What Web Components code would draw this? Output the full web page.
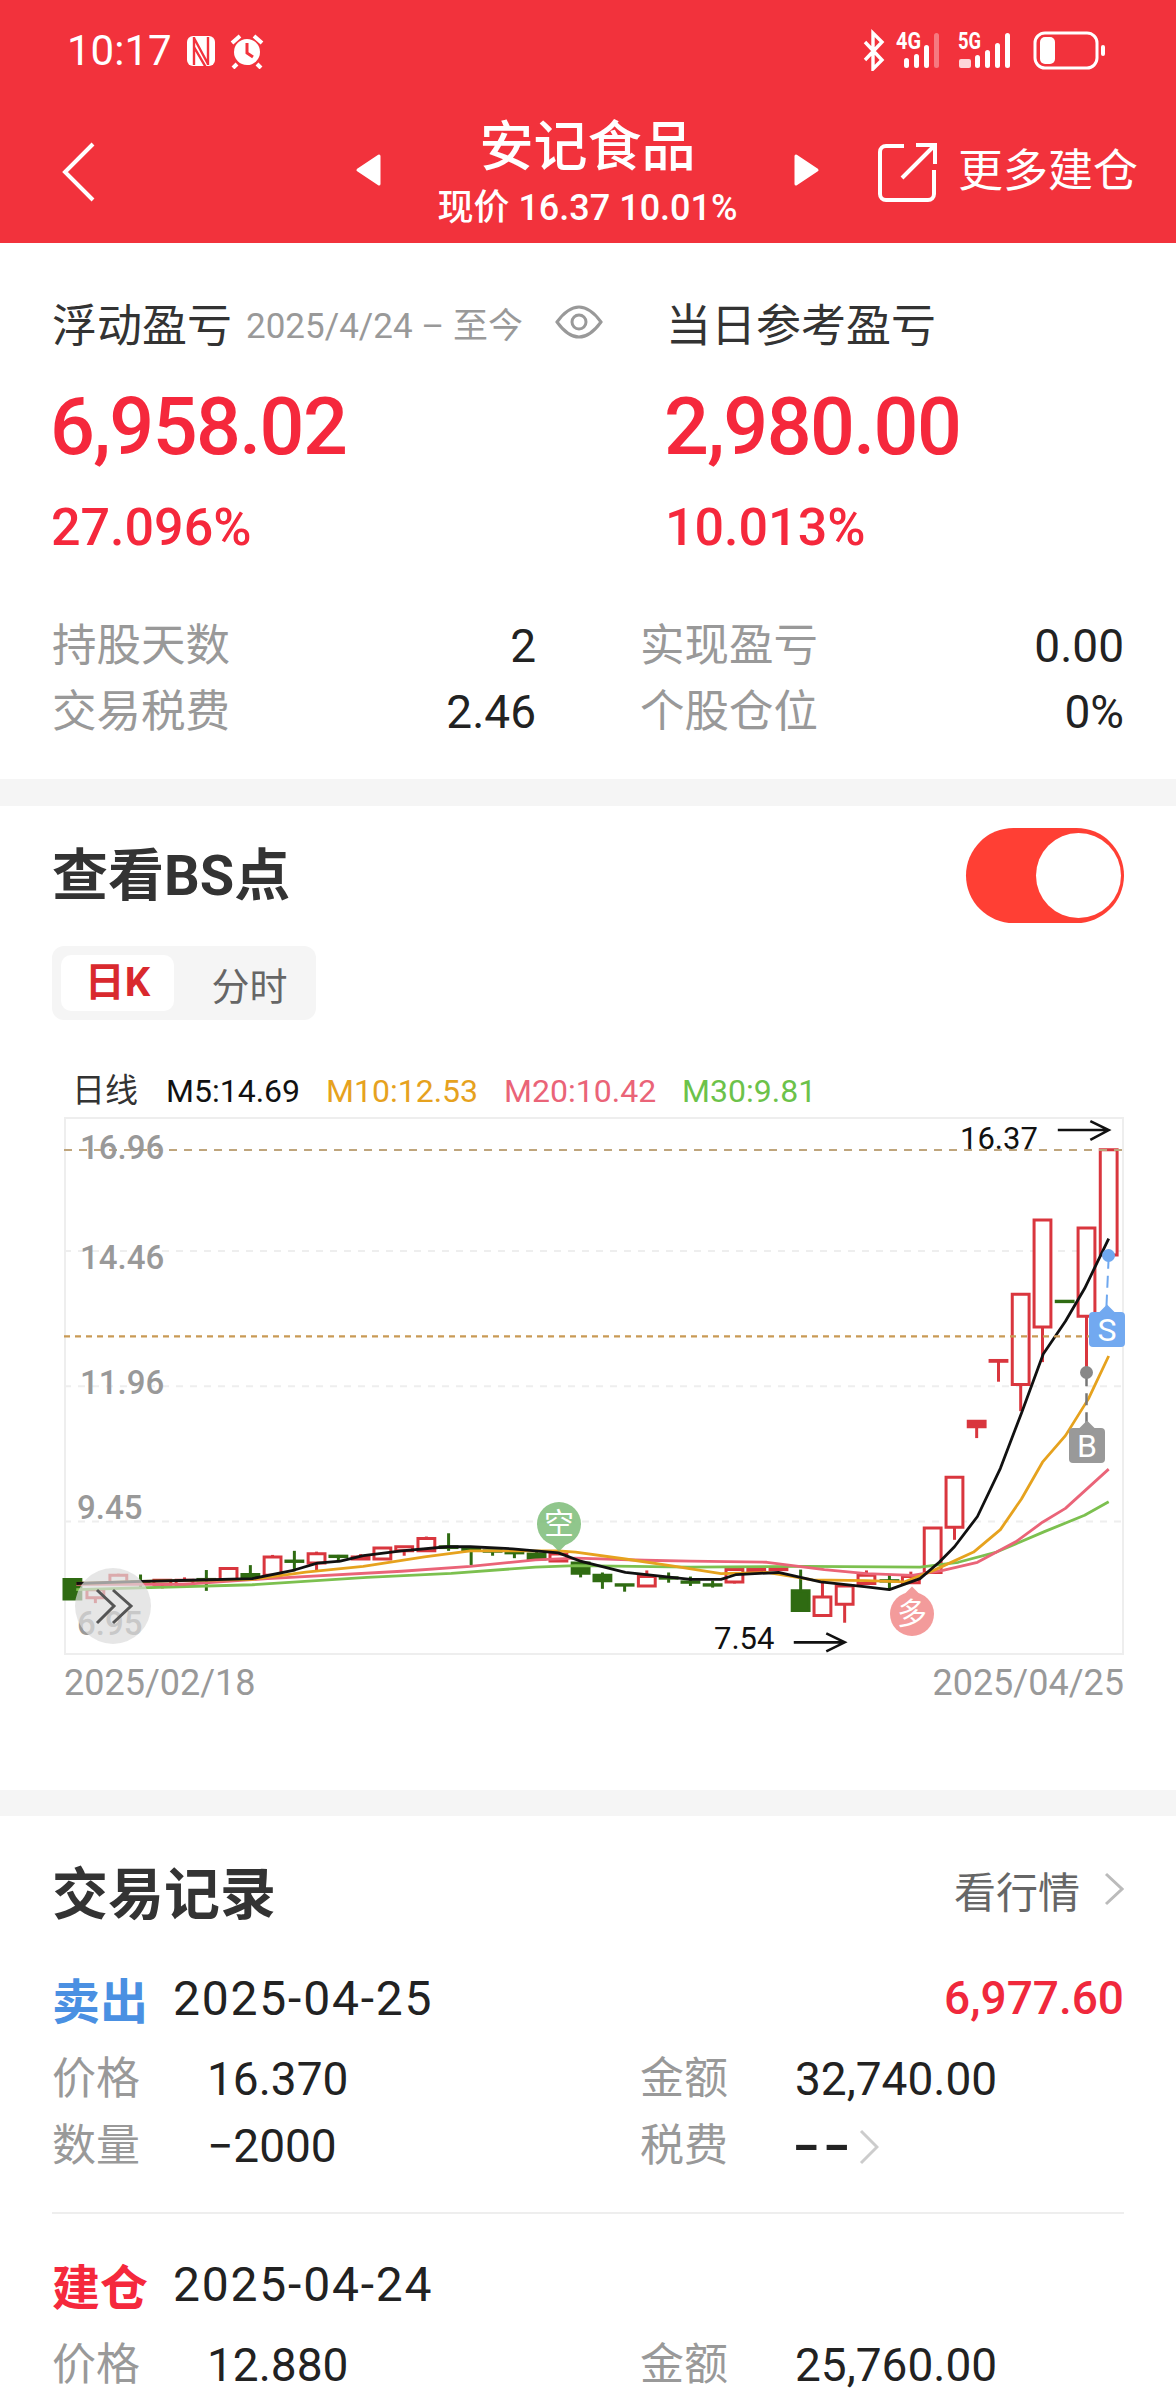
<!DOCTYPE html>
<html lang="zh">
<head>
<meta charset="utf-8">
<title>安记食品</title>
<style>
    html, body { margin: 0; padding: 0; height: 2400px; overflow: hidden; background: #fff; }
    body { font-family: Roboto, "Noto Sans CJK SC", sans-serif; color: #333; }
</style>
</head>
<body>
<stock-header></stock-header>
<pnl-summary></pnl-summary>
<bs-chart></bs-chart>
<trade-list>
    <trade-record kind="sell" action="卖出" date="2025-04-25" profit="6,977.60" price="16.370" amount="32,740.00" qty="−2000" tax="--"></trade-record>
    <trade-record kind="buy" action="建仓" date="2025-04-24" price="12.880" amount="25,760.00"></trade-record>
</trade-list>

<script>
class StockHeader extends HTMLElement {
    constructor() {
        super();
        this.attachShadow({ mode: "open" });
    }

    connectedCallback() {
        this.shadowRoot.innerHTML = `
            <style>
                :host { display: block; height: 243px; background: #f2323c; color: #fff; }
                .status { display: flex; justify-content: space-between; align-items: center; height: 68px; padding: 17px 71px 0 67px; }
                .left, .right { display: flex; align-items: center; }
                .time { font-size: 42px; line-height: 48px; margin-right: 13px; }
                .left svg { margin-right: 12px; }
                .right svg { margin-top: -12px; }
                .nav { display: flex; align-items: center; height: 142px; padding: 16px 38px 0 62px; }
                .back { width: 293px; height: 60px; }
                .middle { display: flex; align-items: center; width: 465px; justify-content: space-between; margin-bottom: 4px; }
                .name { text-align: center; }
                .name b { display: block; font-size: 54px; line-height: 66px; font-weight: 500; margin-top: 5px; }
                .name span { display: block; font-size: 36px; line-height: 44px; font-weight: 500; margin-top: 5px; }
                .more { display: flex; align-items: center; gap: 20px; margin-left: auto; font-size: 45px; line-height: 60px; }
                .status text { font: 700 23px Roboto, sans-serif; fill: #fff; }
            </style>
            <div class="status">
                <div class="left">
                    <span class="time">10:17</span>
                    <svg width="32" height="34" viewBox="0 0 32 34"><rect x="2" y="2" width="28" height="30" rx="6" fill="#fff"/><path d="M9 3v28M23 3v28M9 4l14 26M9 13l14 24" stroke="#f2323c" stroke-width="2.4" fill="none"/></svg>
                    <svg width="36" height="36" viewBox="0 0 36 36"><circle cx="18" cy="19" r="13" fill="#fff"/><path d="M18 10v10l6 4" stroke="#f2323c" stroke-width="3" fill="none"/><path d="M3 10l8-7M33 10l-8-7M8 31l-4 4M28 31l4 4" stroke="#fff" stroke-width="4" fill="none"/></svg>
                </div>
                <div class="right">
                    <svg width="243" height="52" viewBox="0 -12 243 52">
                        <path d="M3 11l17 18-9 9V2l9 9L3 29" stroke="#fff" stroke-width="3.4" fill="none"/>
                        <text x="34" y="18" textLength="25" lengthAdjust="spacingAndGlyphs">4G</text>
                        <g fill="#fff"><rect x="42" y="27" width="5" height="10" rx="2.5"/><rect x="52" y="23" width="5" height="14" rx="2.5"/><rect x="62" y="14" width="5" height="23" rx="2.5"/><rect x="72" y="2" width="5" height="35" rx="2.5" opacity=".35"/></g>
                        <text x="96" y="18" textLength="23" lengthAdjust="spacingAndGlyphs">5G</text>
                        <g fill="#fff"><rect x="97" y="28" width="12" height="9" rx="2" opacity=".8"/><rect x="113" y="24" width="5" height="13" rx="2.5"/><rect x="123" y="19" width="5" height="18" rx="2.5"/><rect x="133" y="12" width="5" height="25" rx="2.5"/><rect x="143" y="2" width="5" height="35" rx="2.5"/></g>
                        <rect x="173" y="2" width="62" height="35" rx="10" fill="none" stroke="#fff" stroke-width="3"/>
                        <rect x="178" y="6" width="15" height="27" rx="5" fill="#fff"/>
                        <rect x="239" y="14" width="4" height="11" rx="2" fill="#fff"/>
                    </svg>
                </div>
            </div>
            <div class="nav">
                <div class="back"><svg width="34" height="60" viewBox="0 0 34 60"><path d="M31 2L3 30l28 28" stroke="#fff" stroke-width="4" fill="none"/></svg></div>
                <div class="middle">
                    <svg width="26" height="34" viewBox="0 0 26 34"><path d="M24 3v28L3 17z" fill="#fff" stroke="#fff" stroke-width="3" stroke-linejoin="round"/></svg>
                    <div class="name"><b>安记食品</b><span>现价 16.37 10.01%</span></div>
                    <svg width="26" height="34" viewBox="0 0 26 34"><path d="M2 3v28l21-14z" fill="#fff" stroke="#fff" stroke-width="3" stroke-linejoin="round"/></svg>
                </div>
                <div class="more">
                    <svg width="60" height="60" viewBox="0 0 60 60"><path d="M26 4H8a6 6 0 0 0-6 6v42a6 6 0 0 0 6 6h42a6 6 0 0 0 6-6V28" stroke="#fff" stroke-width="4" fill="none"/><path d="M24 36L57 3M38 3h19v19" stroke="#fff" stroke-width="4" fill="none"/></svg>
                    <span>更多建仓</span>
                </div>
            </div>
        `;
    }
}

class PnlSummary extends HTMLElement {
    constructor() {
        super();
        this.attachShadow({ mode: "open" });
    }

    connectedCallback() {
        this.shadowRoot.innerHTML = `
            <style>
                :host { display: block; padding: 49px 52px 0; box-sizing: border-box; border-bottom: 27px solid #f5f5f5; height: 563px; }
                .pair { display: grid; grid-template-columns: 614px 1fr; }
                .head { display: flex; align-items: center; height: 60px; font-size: 45px; color: #333; white-space: nowrap; }
                .head small { font-size: 35px; color: #999; margin-left: 14px; }
                .head svg { margin-left: 32px; }
                .big { height: 100px; line-height: 100px; margin: 25px 0 0 -2px; font-size: 79px; font-weight: 500; color: #f5283c; letter-spacing: -1.6px; }
                .pct { height: 60px; line-height: 60px; margin: 21px 0 0 -1px; font-size: 52px; font-weight: 500; color: #f5283c; }
                .stats { display: grid; grid-template-columns: 484px 484px; column-gap: 104px; margin-top: 55px; }
                .stats div { display: flex; justify-content: space-between; height: 66px; line-height: 66px; font-size: 46px; color: #222; }
                .stats span { font-size: 44.5px; color: #999; }
            </style>
            <div class="pair">
                <div class="head">浮动盈亏<small>2025/4/24 – 至今</small>
                    <svg width="48" height="34" viewBox="0 0 48 34"><path d="M2 17C10 6 17 2 24 2s14 4 22 15c-8 11-15 15-22 15S10 28 2 17z" stroke="#999" stroke-width="3" fill="none"/><circle cx="24" cy="17" r="7" stroke="#999" stroke-width="3" fill="none"/></svg>
                </div>
                <div class="head">当日参考盈亏</div>
            </div>
            <div class="pair"><div class="big">6,958.02</div><div class="big">2,980.00</div></div>
            <div class="pair"><div class="pct">27.096%</div><div class="pct">10.013%</div></div>
            <div class="stats">
                <div><span>持股天数</span>2</div>
                <div><span>实现盈亏</span>0.00</div>
                <div><span>交易税费</span>2.46</div>
                <div><span>个股仓位</span>0%</div>
            </div>
        `;
    }
}

// chart coords: 2770 x 1317 grid, x runs -1337..1433 and y runs 90..1407
const CANDLES = [
    [-1315,1222,1270,1220,1272,"f"], [-1255,1247,1267,1247,1280,"r"], [-1195,1212,1232,1208,1232,"r"],
    [-1137,1227,1228,1210,1242,"g"], [-1080,1224,1234,1224,1244,"r"], [-1022,1224,1234,1217,1240,"r"],
    [-965,1222,1223,1199,1250,"g"], [-907,1195,1222,1192,1222,"r"], [-850,1210,1218,1187,1220,"f"],
    [-792,1167,1212,1162,1212,"r"], [-735,1177,1178,1152,1202,"g"], [-677,1159,1182,1154,1199,"r"],
    [-620,1165,1166,1162,1180,"g"], [-562,1167,1172,1160,1172,"r"], [-505,1145,1172,1145,1172,"r"],
    [-448,1142,1152,1142,1164,"r"], [-390,1122,1152,1117,1152,"r"], [-332,1142,1144,1109,1152,"g"],
    [-273,1147,1150,1147,1187,"g"], [-217,1152,1153,1152,1164,"g"], [-160,1156,1157,1147,1170,"g"],
    [-102,1160,1172,1154,1172,"f"], [-45,1160,1177,1160,1177,"r"], [13,1182,1207,1174,1217,"f"],
    [70,1212,1225,1205,1245,"f"], [128,1235,1236,1235,1252,"g"], [186,1215,1238,1200,1238,"r"],
    [243,1218,1219,1205,1230,"g"], [300,1228,1229,1215,1238,"g"], [358,1235,1236,1225,1242,"g"],
    [415,1198,1228,1198,1232,"r"], [472,1195,1202,1190,1205,"r"], [530,1193,1198,1190,1200,"r"],
    [588,1250,1298,1198,1298,"f"], [645,1265,1310,1230,1310,"r"], [703,1238,1283,1238,1328,"r"],
    [760,1212,1232,1200,1232,"r"], [820,1225,1226,1210,1248,"g"], [876,1215,1230,1203,1230,"r"],
    [933,1096,1205,1096,1205,"r"], [990,972,1094,972,1125,"r"], [1048,835,848,835,876,"R"],
    [1105,686,688,686,738,"R"], [1163,524,745,524,810,"r"], [1220,342,604,342,690,"r"],
    [1278,541,542,541,541,"g"], [1335,362,578,362,720,"r"], [1393,170,428,170,428,"r"]
];

const MA_LINES = {
    "#7cc04f": "-1305,1247 -845,1235 -545,1217 -325,1207 -105,1192 0,1188 300,1192 600,1190 900,1192 1000,1180 1100,1155 1225,1105 1330,1065 1393,1032",
    "#ea6478": "-1305,1234 -1025,1234 -805,1220 -455,1202 -275,1190 -105,1174 0,1170 180,1175 300,1177 500,1180 650,1198 760,1208 880,1212 960,1200 1050,1180 1150,1130 1220,1082 1280,1048 1393,952",
    "#e6a21e": "-1305,1232 -1135,1227 -845,1222 -705,1204 -555,1190 -395,1167 -275,1152 -45,1152 0,1155 130,1172 260,1190 380,1208 500,1205 620,1223 760,1225 860,1228 940,1198 1040,1155 1110,1100 1165,1025 1220,935 1280,870 1340,780 1393,675",
    "#111": "-1305,1232 -1135,1227 -1005,1224 -845,1220 -735,1199 -675,1182 -615,1177 -555,1164 -455,1152 -335,1142 -275,1142 -165,1147 -45,1157 15,1178 130,1205 300,1222 380,1222 420,1210 530,1205 640,1228 760,1240 820,1247 900,1220 950,1180 990,1142 1050,1068 1110,950 1165,815 1222,670 1280,590 1330,510 1393,388"
};

class BsChart extends HTMLElement {
    constructor() {
        super();
        this.attachShadow({ mode: "open" });
    }

    candle([x, top, bottom, wickTop, wickBottom, kind]) {
        const color = kind === "r" || kind === "R" ? "#d9363e" : "#2f6b12";
        const fill = kind === "r" ? "#fff" : color;
        const wick = `<path d="M${x} ${wickTop}V${wickBottom}" stroke="${color}" />`;
        return `${wick}<rect x="${x - 22}" y="${top}" width="44" height="${bottom - top}" fill="${fill}" stroke="${color}" />`;
    }

    connectedCallback() {
        const grid = [[418, "#eee"], [749, "#eee"], [1080, "#eee"]]
            .map(([y, c]) => `<path d="M-1337 ${y}H1433" stroke="${c}" stroke-width="2" stroke-dasharray="7 7" />`).join("");
        const lines = Object.entries(MA_LINES)
            .map(([c, pts]) => `<polyline points="${pts}" fill="none" stroke="${c}" stroke-width="2.8" stroke-linejoin="round" />`).join("");

        this.shadowRoot.innerHTML = `
            <style>
                :host { display: block; padding: 22px 52px 0; height: 1010px; box-sizing: border-box; border-bottom: 26px solid #f5f5f5; }
                .top { display: flex; justify-content: space-between; align-items: center; height: 95px; }
                h2 { margin: 0; font-size: 56px; line-height: 70px; font-weight: 700; color: #333; }
                .toggle { position: relative; width: 158px; height: 95px; border-radius: 48px; background: #ff3f34; }
                .toggle i { position: absolute; right: 3px; top: 5px; width: 85px; height: 85px; border-radius: 50%; background: #fff; }
                .seg { display: inline-flex; align-items: center; box-sizing: border-box; width: 264px; height: 74px; margin-top: 23px; padding: 0 9px; background: #f5f5f5; border-radius: 12px; font-size: 38px; color: #666; }
                .seg b { width: 113px; height: 56px; line-height: 56px; text-align: center; background: #fff; border-radius: 10px; font-size: 40px; color: #d9292e; font-weight: 700; }
                .seg span { flex: 1; text-align: center; padding-left: 18px; }
                .legend { display: flex; gap: 26px; height: 44px; line-height: 44px; margin: 49px 0 4px 20px; font-size: 32px; white-space: nowrap; color: #111; }
                .legend span:first-child { margin-right: 2px; font-size: 33px; color: #333; }
                .canvas { position: relative; width: 1060px; height: 538px; margin-left: 12px; box-sizing: border-box; border: 2px solid #eee; }
                svg.plot { position: absolute; left: -2px; top: -2px; width: 1060px; height: 538px; overflow: visible; }
                svg.plot * { vector-effect: non-scaling-stroke; }
                .candles { stroke-width: 3; }
                .axis, .note { position: absolute; line-height: 40px; white-space: nowrap; }
                .axis { font-size: 33px; font-weight: 500; color: #999; }
                .note { font-size: 31px; color: #111; }
                .pin { position: absolute; width: 44px; height: 44px; border-radius: 50%; color: #fff; opacity: .85; font-size: 30px; line-height: 44px; text-align: center; }
                .pin::after { content: ""; position: absolute; left: 16px; width: 12px; height: 12px; transform: rotate(45deg); background: inherit; z-index: -1; }
                .pin.down::after { bottom: -3px; }
                .pin.up::after { top: -3px; }
                .tag { position: absolute; width: 36px; height: 35px; border-radius: 4px; color: #fff; font-size: 32px; line-height: 36px; text-align: center; }
                .tag::before { content: ""; position: absolute; left: 12px; top: -5px; width: 12px; height: 12px; transform: rotate(45deg); background: inherit; }
                .tag span { position: relative; }
                .jump { position: absolute; }
                .dates { display: flex; justify-content: space-between; height: 44px; line-height: 44px; margin: 6px 0 0 12px; font-size: 36px; color: #999; }
            </style>
            <div class="top"><h2>查看BS点</h2><div class="toggle"><i></i></div></div>
            <div class="seg"><b>日K</b><span>分时</span></div>
            <div class="legend">
                <span>日线</span><span>M5:14.69</span>
                <span style="color:#e6a21e">M10:12.53</span>
                <span style="color:#ea6478">M20:10.42</span>
                <span style="color:#6cc24a">M30:9.81</span>
            </div>
            <div class="canvas">
                <svg class="plot" viewBox="-1337 90 2770 1317" preserveAspectRatio="none">
                    ${grid}
                    <g class="candles">${CANDLES.map(c => this.candle(c)).join("")}</g>
                    ${lines}
                    <path d="M-1337 171H1433" stroke="#bfa57c" stroke-width="2" stroke-dasharray="8 7" />
                    <path d="M-1337 627H1433" stroke="#c99a55" stroke-width="2.4" stroke-dasharray="6 5" />
                    <path d="M1393 432L1387 556" stroke="#6fa8ef" stroke-width="2" stroke-dasharray="12 7" fill="none" />
                    <path d="M1335 720V850" stroke="#777" stroke-width="2.5" stroke-dasharray="12 7" fill="none" />
                    <g stroke="#111" stroke-width="2.6" fill="none">
                        <path d="M1260 122H1393M1345 100L1393 122L1345 146" />
                        <path d="M570 1376H703M655 1354L703 1376L655 1398" />
                    </g>
                </svg>
                <span class="axis" style="left:14px;top:9px">16.96</span>
                <span class="axis" style="left:14px;top:119px">14.46</span>
                <span class="axis" style="left:14px;top:244px">11.96</span>
                <span class="axis" style="left:11px;top:369px">9.45</span>
                <span class="axis" style="left:11px;top:485px">6.95</span>
                <span class="note" style="left:894px;top:0">16.37</span>
                <span class="note" style="left:648px;top:500px">7.54</span>
                <span class="pin down" style="left:471px;top:383px;background:#7dbd78">空</span>
                <span class="pin up" style="left:824px;top:473px;background:#f28a8a">多</span>
                <svg style="position:absolute;left:1036px;top:130px" width="13" height="13"><circle cx="6.5" cy="6.5" r="6.5" fill="#6fa8ef"/></svg>
                <svg style="position:absolute;left:1014px;top:247px" width="13" height="13"><circle cx="6.5" cy="6.5" r="6.5" fill="#888"/></svg>
                <span class="tag" style="left:1023px;top:193px;background:#72a9f0"><span>S</span></span>
                <span class="tag" style="left:1003px;top:309px;background:#999"><span>B</span></span>
                <svg class="jump" style="left:9px;top:449px" width="76" height="76" viewBox="0 0 76 76">
                    <circle cx="38" cy="38" r="38" fill="#dcdcdc" fill-opacity=".7"/>
                    <path d="M22 22l17 16-17 17M38 22l18 16-18 17" stroke="#555" stroke-width="3" fill="none"/>
                </svg>
            </div>
            <div class="dates"><span>2025/02/18</span><span>2025/04/25</span></div>
        `;
    }
}

class TradeList extends HTMLElement {
    constructor() {
        super();
        this.attachShadow({ mode: "open" });
        this.shadowRoot.innerHTML = `
            <style>
                :host { display: block; padding: 44px 52px 0; }
                .head { display: flex; justify-content: space-between; align-items: center; height: 70px; margin-bottom: -2px; }
                h2 { margin: 0; font-size: 56px; line-height: 70px; font-weight: 700; color: #333; }
                .link { display: flex; align-items: center; gap: 24px; margin-bottom: 12px; font-size: 42px; color: #666; }
                ::slotted(trade-record:not(:last-child)) { border-bottom: 2px solid #eee; }
            </style>
            <div class="head">
                <h2>交易记录</h2>
                <div class="link">看行情
                    <svg width="20" height="34" viewBox="0 0 20 34"><path d="M2 2l16 15L2 32" stroke="#bbb" stroke-width="3" fill="none"/></svg>
                </div>
            </div>
            <slot></slot>
        `;
    }
}

class TradeRecord extends HTMLElement {
    constructor() {
        super();
        this.attachShadow({ mode: "open" });
    }

    connectedCallback() {
        const kind = this.getAttribute("kind") || "buy";
        const action = this.getAttribute("action") || "";
        const date = this.getAttribute("date") || "";
        const profit = this.getAttribute("profit") || "";
        const price = this.getAttribute("price") || "";
        const amount = this.getAttribute("amount") || "";
        const qty = this.getAttribute("qty");
        const tax = this.getAttribute("tax");

        // second row is only there when the record has a quantity
        const qtyRow = qty ? `
            <div class="row">
                <span class="cell"><i>数量</i>${qty}</span>
                <span class="cell"><i>税费</i><span class="dash">${tax}</span>
                    <svg width="20" height="36" viewBox="0 0 20 36"><path d="M2 2l16 16L2 34" stroke="#ccc" stroke-width="3" fill="none"/></svg>
                </span>
            </div>` : "";

        this.shadowRoot.innerHTML = `
            <style>
                :host { display: block; padding: 40px 0 32px; }
                .title { display: flex; align-items: center; height: 60px; margin-bottom: 18px; color: #222; }
                .title b { width: 121px; font-size: 48px; font-weight: 700; color: ${kind === "sell" ? "#4a90e2" : "#f5283c"}; }
                .title span { letter-spacing: 1.8px; font-size: 48px; }
                .title em { margin-left: auto; font-size: 46px; font-style: normal; font-weight: 500; color: #f0283c; }
                .row { display: grid; grid-template-columns: 588px 1fr; height: 67px; line-height: 67px; font-size: 46px; color: #222; }
                .cell { display: flex; align-items: center; }
                i { width: 155px; flex: none; font-size: 44px; font-style: normal; color: #999; }
                .dash { display: inline-block; width: 52px; margin-left: -3px; margin-right: 3px; font-weight: 700; letter-spacing: 1px; transform: scaleX(1.6); transform-origin: left; }
                svg { margin-left: 12px; }
            </style>
            <div class="title"><b>${action}</b><span>${date}</span><em>${profit}</em></div>
            <div class="row">
                <span class="cell"><i>价格</i>${price}</span>
                <span class="cell"><i>金额</i>${amount}</span>
            </div>
            ${qtyRow}
        `;
    }
}

customElements.define("stock-header", StockHeader);
customElements.define("pnl-summary", PnlSummary);
customElements.define("bs-chart", BsChart);
customElements.define("trade-list", TradeList);
customElements.define("trade-record", TradeRecord);
</script>
</body>
</html>
